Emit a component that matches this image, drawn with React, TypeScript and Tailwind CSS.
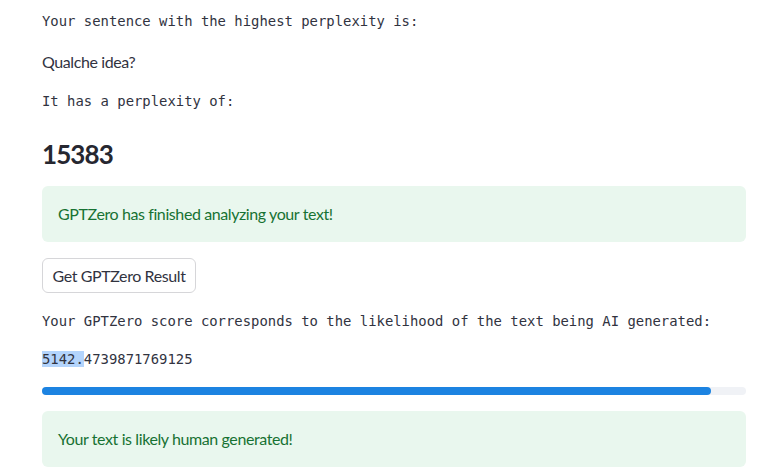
import React from "react";

const mono = "font-['DejaVu_Sans_Mono','Liberation_Mono',monospace] text-[13.9px] leading-[24px] text-[#31333f]";
const sans = "font-['Lato','Noto_Sans',sans-serif] tracking-[-0.4px]";

export default function App() {
    const score = 95;
    return (
        <div className="min-h-[476px] w-[772px] bg-white pl-[42px] pr-[26px] text-[#31333f]">
            <p className={`${mono} pt-[9px]`}>Your sentence with the highest perplexity is:</p>
            <p className={`${sans} mt-[17px] text-[16px] leading-[24px]`}>Qualche idea?</p>
            <p className={`${mono} mt-[15px]`}>It has a perplexity of:</p>
            <h2 className={`${sans} mt-[23px] text-[26px] font-bold leading-[36px] tracking-[-0.9px] text-[#262730]`}>15383</h2>

            <div className="mt-[14px] flex h-[56px] items-center rounded-md bg-[#e9f7ee] px-4">
                <span className={`${sans} text-[16px] text-[#177233]`}>GPTZero has finished analyzing your text!</span>
            </div>

            <button className={`${sans} mt-4 flex h-[35px] w-[154px] items-center justify-center rounded-md border border-[#d6d6d9] bg-white text-[16px] text-[#31333f]`}>
                Get GPTZero Result
            </button>

            <p className={`${mono} mt-[16px]`}>Your GPTZero score corresponds to the likelihood of the text being AI generated:</p>
            <p className={`${mono} mt-[14px]`}>
                <span className="bg-[#b3d4fc]">5142.</span>4739871769125
            </p>

            <div className="mt-[16px] h-[8px] w-full rounded-full bg-[#f0f2f6]">
                <div className="h-full rounded-full bg-[#1c83e1]" style={{ width: `${score}%` }}></div>
            </div>

            <div className="mt-[16px] flex h-[56px] items-center rounded-md bg-[#e9f7ee] px-4">
                <span className={`${sans} text-[16px] text-[#177233]`}>Your text is likely human generated!</span>
            </div>
        </div>
    );
}
